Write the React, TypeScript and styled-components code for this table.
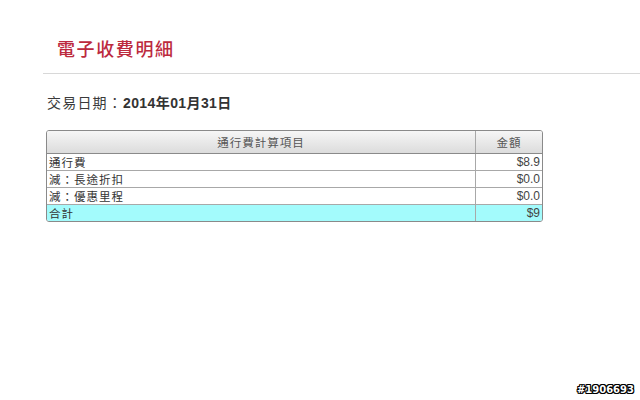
import styled, { createGlobalStyle } from "styled-components";

const GlobalStyle = createGlobalStyle`
    html, body {
        margin: 0;
        padding: 0;
        background: #ffffff;
        font-family: "Liberation Sans", Arial, "Noto Sans CJK TC", sans-serif;
    }
`;

const Page = styled.div`
    width: 640px;
    height: 400px;
    position: relative;
    overflow: hidden;
    background: #ffffff;
`;

const Header = styled.div`
    padding: 37px 0 0 14px;
    border-bottom: 1px solid #d8d8d8;
    margin-left: 43px;
    box-sizing: border-box;
    height: 74px;
`;

const Title = styled.h1`
    margin: 0;
    font-size: 18px;
    line-height: 22px;
    font-weight: 500;
    color: #bc2a3e;
    letter-spacing: 1.6px;
    font-family: "Noto Sans CJK TC", sans-serif;
`;

const Content = styled.div`
    padding: 20px 0 0 47px;
`;

const DateLine = styled.div`
    font-size: 14px;
    line-height: 18px;
    color: #3a3a3a;
    font-family: "Liberation Sans", "Noto Sans CJK TC", sans-serif;
    margin-bottom: 18px;
    letter-spacing: 1.2px;

    b {
        font-weight: bold;
        letter-spacing: 0.4px;
        color: #333;
    }
`;

const Table = styled.div`
    width: 495px;
    margin-left: -1px;
    border: 1px solid #8a8a8a;
    border-radius: 3px;
    overflow: hidden;
    font-family: "Noto Sans CJK TC", sans-serif;
    font-size: 11.5px;
    letter-spacing: 1px;
    color: #333;
`;

const Row = styled.div<{ $head?: boolean; $total?: boolean }>`
    display: grid;
    grid-template-columns: 428px 1fr;
    height: ${(p) => (p.$head ? "22px" : "16px")};
    background: ${(p) =>
        p.$head ? "linear-gradient(#f6f6f6, #dcdcdc)" : p.$total ? "#a3fbfc" : "#ffffff"};
    border-top: ${(p) => (p.$head ? "none" : "1px solid #a8a8a8")};

    &:nth-child(2) {
        border-top: 1px solid #8a8a8a;
    }
`;

const Cell = styled.div<{ $align?: string; $head?: boolean }>`
    display: flex;
    align-items: center;
    justify-content: ${(p) => p.$align || "flex-start"};
    padding: 0 2px;
    line-height: 16px;
    white-space: nowrap;
    color: ${(p) => (p.$head ? "#555" : "#333")};

    & + & {
        border-left: 1px solid #a8a8a8;
    }
`;

const Amount = styled.span`
    font-family: "Liberation Sans", Arial, sans-serif;
    font-size: 12px;
    letter-spacing: 0;
    color: #444;
`;

const Watermark = styled.div`
    position: absolute;
    right: 6px;
    bottom: 5px;
    font-family: "DejaVu Sans", sans-serif;
    font-weight: bold;
    font-size: 10px;
    color: #ffffff;
    text-shadow: 1px 0 0 #000, -1px 0 0 #000, 0 1px 0 #000, 0 -1px 0 #000,
        1px 1px 0 #000, -1px -1px 0 #000, 1px -1px 0 #000, -1px 1px 0 #000;
`;

const rows = [
    { label: "通行費", amount: "$8.9" },
    { label: "減：長途折扣", amount: "$0.0" },
    { label: "減：優惠里程", amount: "$0.0" },
];

export default function App() {
    return (
        <Page>
            <GlobalStyle />
            <Header>
                <Title>電子收費明細</Title>
            </Header>
            <Content>
                <DateLine>
                    交易日期：<b>2014年01月31日</b>
                </DateLine>
                <Table>
                    <Row $head>
                        <Cell $head $align="center">通行費計算項目</Cell>
                        <Cell $head $align="center">金額</Cell>
                    </Row>
                    {rows.map((r) => (
                        <Row key={r.label}>
                            <Cell>{r.label}</Cell>
                            <Cell $align="flex-end">
                                <Amount>{r.amount}</Amount>
                            </Cell>
                        </Row>
                    ))}
                    <Row $total>
                        <Cell>合計</Cell>
                        <Cell $align="flex-end">
                            <Amount>$9</Amount>
                        </Cell>
                    </Row>
                </Table>
            </Content>
            <Watermark>#1906693</Watermark>
        </Page>
    );
}
